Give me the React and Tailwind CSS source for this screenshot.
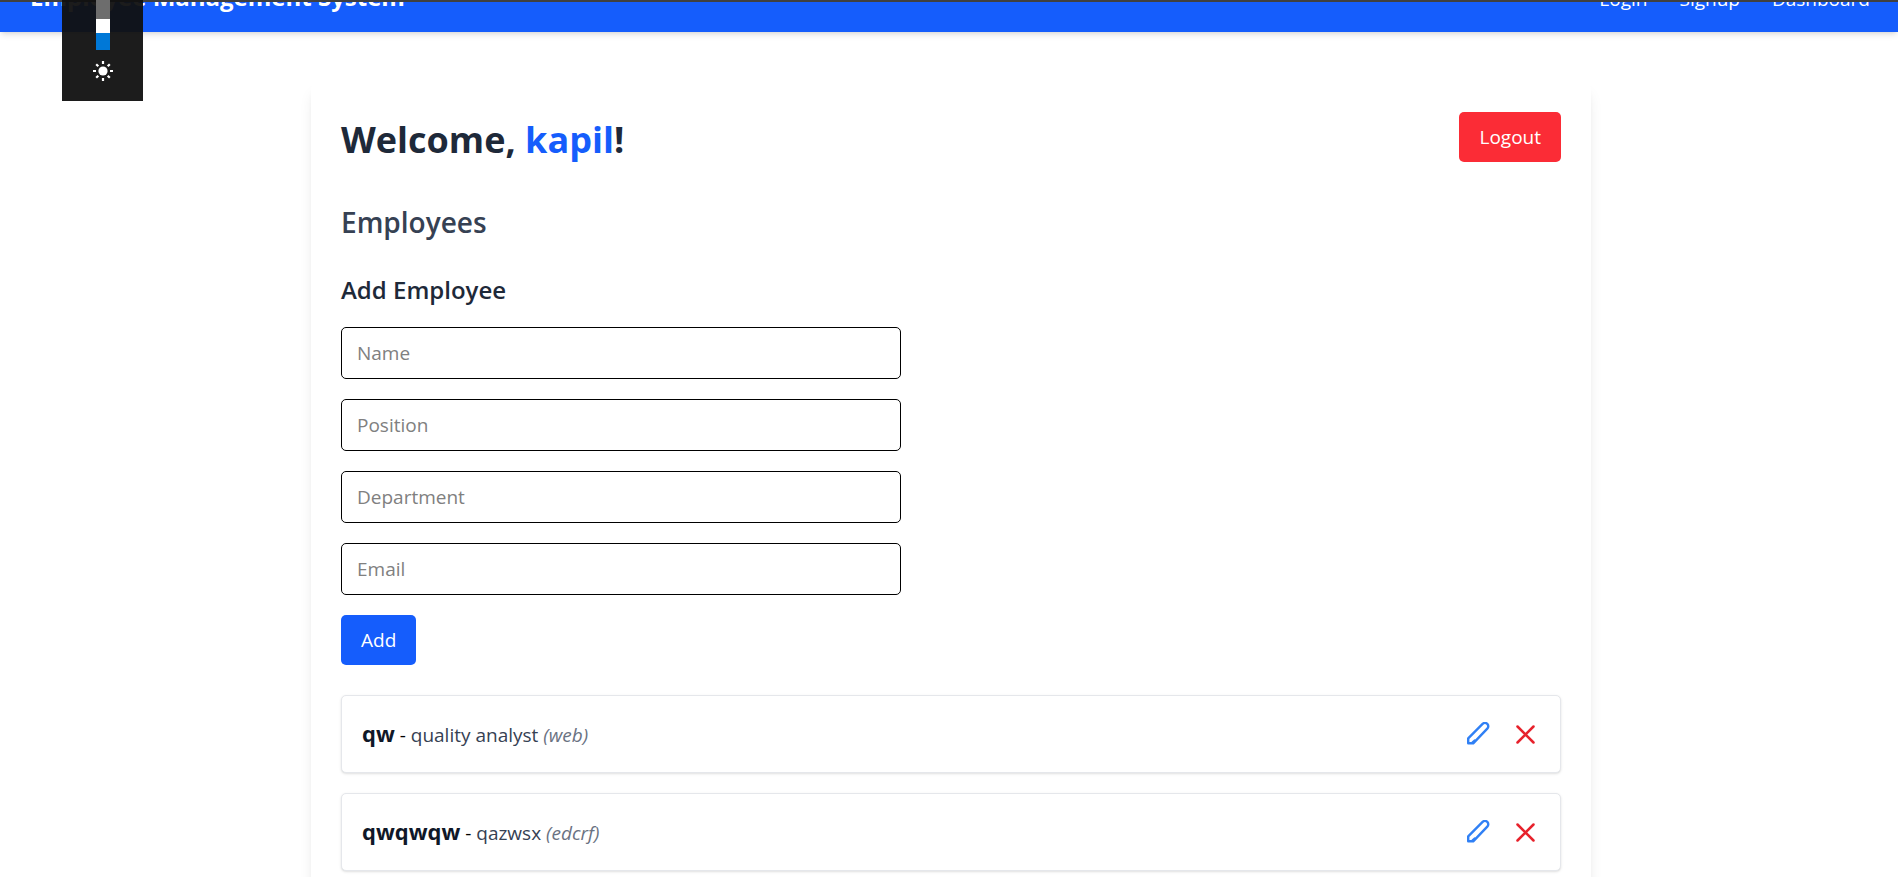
const navLinks = ["Login", "Signup", "Dashboard"];
const fields = ["Name", "Position", "Department", "Email"];
const employees = [
  { name: "qw", position: "quality analyst", department: "web" },
  { name: "qwqwqw", position: "qazwsx", department: "edcrf" },
];

function SunIcon() {
  return (
    <svg viewBox="0 0 22 22" className="size-[22px]" fill="none" stroke="#fff" strokeWidth="2.2" aria-hidden="true">
      <circle cx="11" cy="11" r="4.6" fill="#fff" stroke="none" />
      <path d="M11 1v3M11 18v3M1 11h3M18 11h3M4.2 4.2l2.1 2.1M15.7 15.7l2.1 2.1M4.2 17.8l2.1-2.1M15.7 6.3l2.1-2.1" />
    </svg>
  );
}

function PencilIcon() {
  return (
    <svg viewBox="0 0 25 25" className="size-[25px]" fill="none" stroke="currentColor" strokeWidth="2.4" strokeLinecap="round" strokeLinejoin="round" aria-hidden="true">
      <path d="M2.2 21.300V16.300L16.600 1.900a3.300 3.300 0 0 1 4.700 0a3.300 3.300 0 0 1 0 4.700L7.200 21.300Z" />
      <path d="M6.600 20.300L8.600 18.600" />
    </svg>
  );
}

function CrossIcon() {
  return (
    <svg viewBox="0 0 25 25" className="size-[25px]" fill="none" stroke="currentColor" strokeWidth="2.5" strokeLinecap="round" aria-hidden="true">
      <path d="M4.500 4.500l16 16M20.500 4.500l-16 16" />
    </svg>
  );
}

export default function App() {
  return (
    <div className="h-screen overflow-hidden bg-white font-['Open_Sans','Noto_Sans',sans-serif] text-[19px] leading-[30px]">
      <nav className="flex h-8 items-end justify-between overflow-hidden border-t-2 border-[#404040] bg-[#155dfc] pr-7 pb-[18px] pl-[30px] text-white shadow-md">
        <a href="#home" className="text-2xl leading-[35px] font-bold">Employee Management System</a>
        <div className="flex gap-8 font-medium">
          {navLinks.map((label) => (
            <a key={label} href={"#" + label.toLowerCase()}>{label}</a>
          ))}
        </div>
      </nav>

      <div className="absolute top-0 left-[62px] flex h-[101px] w-[81px] flex-col items-center bg-[#101010]/95">
        <div className="h-[19px] w-[14px] bg-[#6d6d6d]" />
        <div className="h-[14px] w-[14px] bg-white" />
        <div className="mb-[10px] h-[17px] w-[14px] bg-[#0078d7]" />
        <SunIcon />
      </div>

      <div className="pt-[50px] pl-1">
        <main className="mx-auto w-full max-w-[1280px] rounded-lg bg-white p-[30px] shadow-lg">
          <header className="mb-10 flex items-end justify-between">
            <h1 className="text-4xl leading-[45px] font-bold text-[#1e2939]">
              Welcome, <span className="text-[#155dfc]">kapil</span>!
            </h1>
            <button type="button" className="rounded-[5px] bg-[#fb2c36] px-5 py-[10px] text-white">Logout</button>
          </header>

          <h2 className="mb-[30px] text-[28px] leading-10 font-semibold text-[#364153]">Employees</h2>

          <form className="mb-[30px] flex flex-col items-start gap-5">
            <h3 className="text-2xl leading-[35px] font-semibold text-[#1e2939]">Add Employee</h3>
            {fields.map((label) => (
              <input
                key={label}
                type="text"
                aria-label={label}
                placeholder={label}
                className="w-full max-w-[560px] rounded-[5px] border border-black px-[15px] py-[10px] placeholder:text-[#808080]"
              />
            ))}
            <button type="button" className="rounded-[5px] bg-[#155dfc] px-5 py-[10px] text-white">Add</button>
          </form>

          <ul className="flex flex-col gap-5">
            {employees.map((e) => (
              <li key={e.name} className="flex items-center justify-between rounded-[5px] border border-gray-200 bg-white p-5 shadow-sm">
                <p className="leading-[34px]">
                  <strong className="text-[22px] font-bold text-[#101828]">{e.name}</strong> -{" "}
                  <span className="text-[#364153]">{e.position}</span>{" "}
                  <em className="text-[#6a7282]">({e.department})</em>
                </p>
                <div className="flex items-center gap-[22px] pr-0.5">
                  <button type="button" aria-label={"Edit " + e.name} className="text-[#3080f5]"><PencilIcon /></button>
                  <button type="button" aria-label={"Delete " + e.name} className="text-[#e7222c]"><CrossIcon /></button>
                </div>
              </li>
            ))}
          </ul>
        </main>
      </div>
    </div>
  );
}
